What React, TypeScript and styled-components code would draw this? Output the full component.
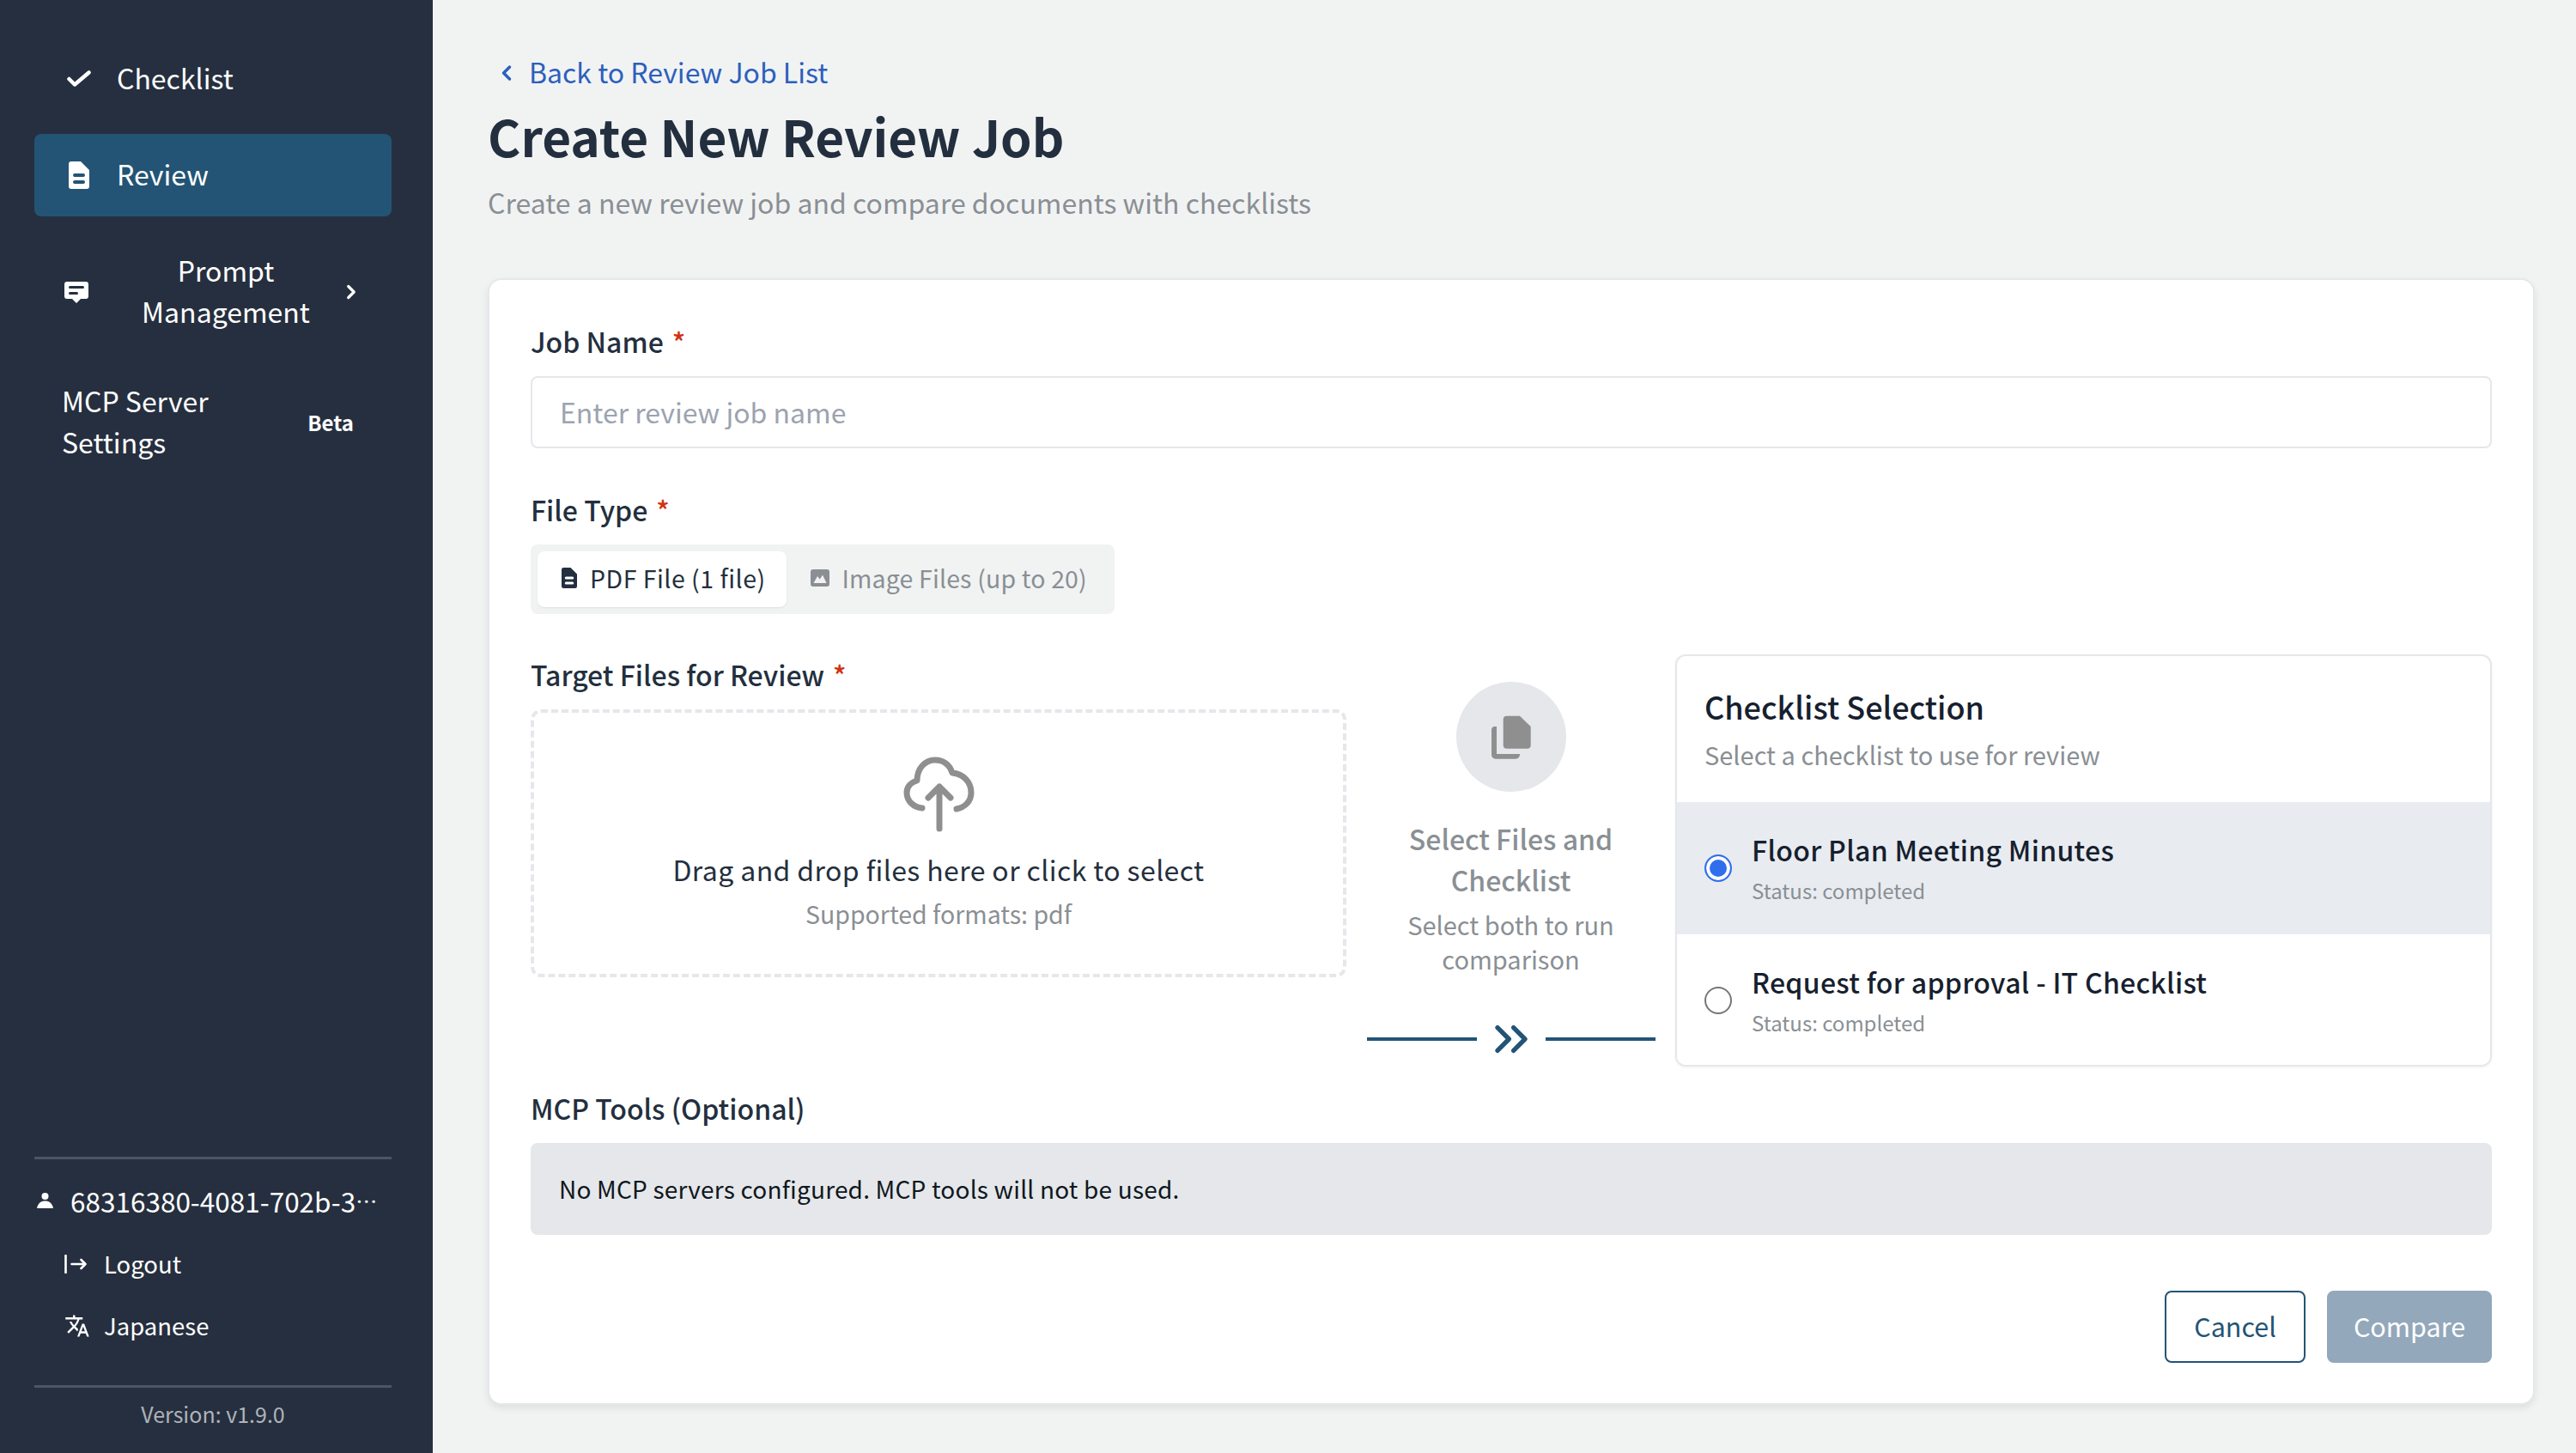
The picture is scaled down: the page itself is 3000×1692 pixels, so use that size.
import * as React from 'react';
import styled, { createGlobalStyle } from 'styled-components';
import { MdTranslate } from 'react-icons/md';
import { LuChevronLeft, LuChevronRight, LuChevronsRight } from 'react-icons/lu';

const GlobalStyle = createGlobalStyle`
  html, body { margin: 0; padding: 0; }
  body {
    background: #f1f3f3;
    font-family: "Noto Sans CJK JP", "Noto Sans", sans-serif;
    color: #232f3e;
  }
  * { box-sizing: border-box; }
`;

const Page = styled.div`
  display: flex;
  width: 3000px;
  height: 1692px;
  overflow: hidden;
`;

const Sidebar = styled.aside`
  width: 504px;
  flex-shrink: 0;
  background: #262f3f;
  color: #fff;
  display: flex;
  flex-direction: column;
  padding: 44px 48px 16px 40px;
`;

const Nav = styled.nav`
  flex: 1;
  display: flex;
  flex-direction: column;
`;

const NavItem = styled.a<{ $active?: boolean; $gap?: number }>`
  display: flex;
  align-items: center;
  min-height: 96px;
  margin-bottom: ${({ $gap }) => $gap ?? 16}px;
  padding: 22px 32px 26px;
  border-radius: 8px;
  font-size: 32px;
  line-height: 48px;
  background: ${({ $active }) => ($active ? '#235475' : 'transparent')};
`;

const NavIcon = styled.span<{ $shift?: number }>`
  width: 64px;
  flex-shrink: 0;
  display: flex;
  align-items: center;
  padding-left: ${({ $shift }) => $shift ?? 0}px;
  margin-top: 4px;
`;

const NavLabel = styled.span<{ $center?: boolean }>`
  flex: 1;
  text-align: ${({ $center }) => ($center ? 'center' : 'left')};
  margin-right: ${({ $center }) => ($center ? 6 : 0)}px;
`;

const Caret = styled.span`
  display: flex;
  font-size: 26px;
  margin-top: 4px;
  margin-right: 2px;
`;

const BetaTag = styled.span`
  font-size: 24px;
  font-weight: 700;
  margin: 4px 12px 0 72px;
`;

const FooterBlock = styled.div`
  border-top: 3px solid #4b5563;
`;

const UserRow = styled.div`
  display: flex;
  align-items: center;
  height: 36px;
  margin: 30px 0 20px 0;
  font-size: 31.5px;
  white-space: nowrap;
`;

const UserIcon = styled.span`
  display: flex;
  width: 42px;
  padding-left: 3px;
  flex-shrink: 0;
`;

const UserDots = styled.span`
  font-size: 25px;
`;

const FooterLink = styled.a`
  display: flex;
  align-items: center;
  height: 72px;
  padding: 0 0 2px 35px;
  font-size: 27.5px;
`;

const FooterIcon = styled.span`
  display: flex;
  width: 46px;
  font-size: 30px;
  margin-top: 2px;
`;

const Version = styled.div`
  margin-top: 33px;
  border-top: 3px solid #4b5563;
  height: 63px;
  display: flex;
  align-items: center;
  justify-content: center;
  font-size: 25px;
  color: #aeb3ba;
`;

const Main = styled.main`
  flex: 1;
  min-width: 0;
  padding: 60px 48px 0 64px;
`;

const BackLink = styled.a`
  display: flex;
  align-items: center;
  height: 46px;
  font-size: 32px;
  color: #2d5fbd;
  padding-left: 8px;
  gap: 12px;
`;

const BackIcon = styled.span`
  display: flex;
  font-size: 28px;
  margin-top: 4px;
`;

const Title = styled.h1`
  margin: 12px 0 0;
  font-size: 58.5px;
  line-height: 80px;
  font-weight: 700;
  color: #232f3e;
`;

const Subtitle = styled.p`
  margin: 14px 0 0;
  font-size: 32px;
  line-height: 46px;
  color: #8a8f94;
`;

const Card = styled.section`
  margin-top: 66px;
  height: 1312px;
  background: #fff;
  border: 2px solid #e5e7eb;
  border-radius: 16px;
  box-shadow: 0 4px 8px rgba(0, 0, 0, 0.08);
  padding: 48px 48px 46px;
`;

const FieldLabel = styled.label<{ $top?: number }>`
  display: block;
  height: 46px;
  line-height: 46px;
  margin: ${({ $top }) => $top ?? 0}px 0 18px;
  font-size: 32px;
  font-weight: 500;
  color: #232f3e;
`;

const Req = styled.span`
  color: #d13212;
  margin-left: 10px;
`;

const TextInput = styled.input`
  display: block;
  width: 100%;
  height: 84px;
  padding: 0 32px 3px;
  border: 2px solid #e5e7eb;
  border-radius: 8px;
  font: inherit;
  font-size: 32px;
  outline: none;
  &::placeholder { color: #9ca3af; }
`;

const Toggle = styled.div`
  display: inline-flex;
  align-items: center;
  height: 81px;
  padding: 8px;
  background: #f1f3f3;
  border-radius: 8px;
  vertical-align: top;
`;

const ToggleBtn = styled.button<{ $on?: boolean }>`
  display: flex;
  align-items: center;
  gap: 15px;
  height: 65px;
  padding: 0 24px 4px 28px;
  border: 0;
  border-radius: 8px;
  font: inherit;
  font-size: 28.5px;
  letter-spacing: ${({ $on }) => ($on ? '0.5px' : '0.15px')};
  background: ${({ $on }) => ($on ? '#fff' : 'transparent')};
  color: ${({ $on }) => ($on ? '#232f3e' : '#8a8f94')};
  box-shadow: ${({ $on }) => ($on ? '0 1px 2px rgba(0,0,0,.08)' : 'none')};
`;

const CompareGrid = styled.div`
  display: grid;
  grid-template-columns: 950px 1fr 951px;
  margin-top: 47px;
  height: 480px;
`;

const DropZone = styled.div`
  height: 312px;
  border: 4px dashed #e5e7eb;
  border-radius: 12px;
  display: flex;
  flex-direction: column;
  align-items: center;
  padding-top: 48px;
`;

const UploadSvg = styled.svg`
  width: 90px;
  height: 94px;
  margin-left: 4px;
  color: #8f8f8f;
`;

const DropText = styled.div`
  margin-top: 16px;
  font-size: 32px;
  line-height: 48px;
  letter-spacing: 0.4px;
`;

const DropHint = styled.div`
  margin-top: 6px;
  font-size: 28.5px;
  line-height: 44px;
  color: #8a8f94;
`;

const Middle = styled.div`
  display: flex;
  flex-direction: column;
  align-items: center;
  padding: 32px 0 0;
`;

const CircleIcon = styled.div`
  width: 128px;
  height: 128px;
  border-radius: 50%;
  background: #e5e7eb;
  color: #8f8f8f;
  display: flex;
  align-items: center;
  justify-content: center;
`;

const MiddleTitle = styled.div`
  width: 270px;
  margin-top: 30px;
  text-align: center;
  font-size: 32px;
  font-weight: 500;
  line-height: 48px;
  color: #8a8f94;
`;

const MiddleHint = styled.div`
  width: 270px;
  margin-top: 8px;
  text-align: center;
  font-size: 29px;
  line-height: 40px;
  color: #8a8f94;
`;

const ArrowRow = styled.div`
  margin-top: auto;
  display: flex;
  align-items: center;
  gap: 8px;
  color: #235475;
`;

const ArrowLine = styled.span`
  width: 128px;
  height: 4px;
  background: #235475;
`;

const ArrowIcon = styled.span`
  display: flex;
  font-size: 64px;
`;

const ChecklistPanel = styled.div`
  border: 2px solid #e5e7eb;
  border-radius: 12px;
  overflow: hidden;
  box-shadow: 0 1px 3px rgba(0, 0, 0, 0.06);
  height: 480px;
`;

const PanelHead = styled.div`
  height: 170px;
  padding: 32px 32px 0;
`;

const PanelTitle = styled.div`
  font-size: 36px;
  line-height: 52px;
  font-weight: 500;
  color: #16202e;
`;

const PanelSub = styled.div`
  margin-top: 8px;
  font-size: 29px;
  line-height: 44px;
  color: #8a8f94;
`;

const Option = styled.label<{ $on?: boolean }>`
  display: flex;
  align-items: center;
  height: 154px;
  padding: 0 32px;
  background: ${({ $on }) => ($on ? '#e8ecf0' : '#fff')};
`;

const Radio = styled.span<{ $on?: boolean }>`
  width: 32px;
  height: 32px;
  border-radius: 50%;
  flex-shrink: 0;
  margin-right: 23px;
  border: 2px solid ${({ $on }) => ($on ? '#2f6fed' : '#767676')};
  background: ${({ $on }) => ($on ? '#2f6fed' : '#fff')};
  box-shadow: ${({ $on }) => ($on ? 'inset 0 0 0 4px #fff' : 'none')};
`;

const OptionName = styled.div`
  font-size: 32px;
  line-height: 44px;
  font-weight: 500;
  letter-spacing: 0.3px;
  color: #16202e;
`;

const OptionStatus = styled.div`
  margin-top: 8px;
  font-size: 24px;
  line-height: 36px;
  color: #8a8f94;
`;

const Notice = styled.div`
  height: 107px;
  display: flex;
  align-items: center;
  padding: 0 33px 2px;
  background: #e5e7ea;
  border-radius: 8px;
  font-size: 28px;
  letter-spacing: 0.2px;
  color: #0f1720;
`;

const Actions = styled.div`
  display: flex;
  justify-content: flex-end;
  gap: 25px;
  margin-top: 65px;
`;

const Button = styled.button<{ $primary?: boolean }>`
  height: 84px;
  min-width: ${({ $primary }) => ($primary ? 192 : 164)}px;
  padding: 0 0 2px;
  border-radius: 8px;
  font: inherit;
  font-size: 30.5px;
  border: 2px solid ${({ $primary }) => ($primary ? '#93a8ba' : '#235475')};
  background: ${({ $primary }) => ($primary ? '#93a8ba' : '#fff')};
  color: ${({ $primary }) => ($primary ? '#fff' : '#235475')};
`;

const CheckIcon = () => (
  <svg width="28" height="20" viewBox="0 0 28 20" fill="none" stroke="currentColor" strokeWidth="4.5" strokeLinecap="round" strokeLinejoin="round">
    <path d="M2.5 10 9 16.5 25.5 2.5" />
  </svg>
);

const DocIcon = ({ w, h }: { w: number; h: number }) => (
  <svg width={w} height={h} viewBox="0 0 24 32" fill="currentColor" fillRule="evenodd">
    <path d="M3 0H14L24 10V29a3 3 0 0 1-3 3H3a3 3 0 0 1-3-3V3a3 3 0 0 1 3-3ZM7 14a2 2 0 0 0 0 4H17a2 2 0 0 0 0-4ZM7 22a2 2 0 0 0 0 4H17a2 2 0 0 0 0-4Z" />
  </svg>
);

const MessageIcon = () => (
  <svg width="28" height="25" viewBox="0 0 28 25" fill="currentColor" fillRule="evenodd">
    <path d="M3 0H25a3 3 0 0 1 3 3V17a3 3 0 0 1-3 3H19L14 25 9 20H3a3 3 0 0 1-3-3V3a3 3 0 0 1 3-3ZM6.5 5a1.5 1.5 0 0 0 0 3H21.5a1.5 1.5 0 0 0 0-3ZM6.5 12a1.5 1.5 0 0 0 0 3H14.5a1.5 1.5 0 0 0 0-3Z" />
  </svg>
);

const PersonIcon = () => (
  <svg width="19" height="18" viewBox="0 0 19 18" fill="currentColor">
    <circle cx="9.5" cy="4" r="4" />
    <path d="M0 18C1 12 5 9.5 9.5 9.5 14 9.5 18 12 19 18Z" />
  </svg>
);

const LogoutIcon = () => (
  <svg width="26" height="22" viewBox="0 0 26 22" fill="none" stroke="currentColor" strokeWidth="2.6" strokeLinecap="round" strokeLinejoin="round">
    <path d="M1.5 1V21M8.5 11H24.5M19.5 6 24.5 11 19.5 16" />
  </svg>
);

const ImageIcon = () => (
  <svg width="22" height="20" viewBox="0 0 22 20" fill="currentColor" fillRule="evenodd">
    <path d="M3 0H19a3 3 0 0 1 3 3V17a3 3 0 0 1-3 3H3a3 3 0 0 1-3-3V3a3 3 0 0 1 3-3ZM3.5 16 8 8 10.8 11.5 14 6.5 18.5 16Z" />
  </svg>
);

const CopiesIcon = () => (
  <svg width="46" height="51" viewBox="27 22 46 51" fill="currentColor">
    <path d="M44.7 22.7H60L72.7 35V56.7a4 4 0 0 1-4 4H44.7a4 4 0 0 1-4-4V26.7a4 4 0 0 1 4-4Z" />
    <path d="M33 35H31a4 4 0 0 0-4 4V68a4.7 4.7 0 0 0 4.7 4.7H55a5 5 0 0 0 5-5.7H33Z" />
  </svg>
);

export default function App() {
  return (
    <Page>
      <GlobalStyle />
      <Sidebar>
        <Nav>
          <NavItem>
            <NavIcon $shift={6}><CheckIcon /></NavIcon>
            <NavLabel>Checklist</NavLabel>
          </NavItem>
          <NavItem $active>
            <NavIcon $shift={8}><DocIcon w={24} h={32} /></NavIcon>
            <NavLabel>Review</NavLabel>
          </NavItem>
          <NavItem $gap={8}>
            <NavIcon $shift={3}><MessageIcon /></NavIcon>
            <NavLabel $center>Prompt Management</NavLabel>
            <Caret><LuChevronRight strokeWidth={3} /></Caret>
          </NavItem>
          <NavItem>
            <NavLabel>MCP Server Settings</NavLabel>
            <BetaTag>Beta</BetaTag>
          </NavItem>
        </Nav>
        <FooterBlock>
          <UserRow>
            <UserIcon><PersonIcon /></UserIcon>
            68316380-4081-702b-3<UserDots>⋯</UserDots>
          </UserRow>
          <FooterLink>
            <FooterIcon><LogoutIcon /></FooterIcon>
            Logout
          </FooterLink>
          <FooterLink>
            <FooterIcon><MdTranslate /></FooterIcon>
            Japanese
          </FooterLink>
          <Version>Version: v1.9.0</Version>
        </FooterBlock>
      </Sidebar>
      <Main>
        <BackLink>
          <BackIcon><LuChevronLeft strokeWidth={3} /></BackIcon>
          Back to Review Job List
        </BackLink>
        <Title>Create New Review Job</Title>
        <Subtitle>Create a new review job and compare documents with checklists</Subtitle>
        <Card>
          <FieldLabel>Job Name<Req>*</Req></FieldLabel>
          <TextInput placeholder="Enter review job name" readOnly />
          <FieldLabel $top={48}>File Type<Req>*</Req></FieldLabel>
          <Toggle>
            <ToggleBtn $on>
              <DocIcon w={18} h={24} />
              PDF File (1 file)
            </ToggleBtn>
            <ToggleBtn>
              <ImageIcon />
              Image Files (up to 20)
            </ToggleBtn>
          </Toggle>
          <CompareGrid>
            <div>
              <FieldLabel>Target Files for Review<Req>*</Req></FieldLabel>
              <DropZone>
                <UploadSvg viewBox="20 8 90 94" fill="none" stroke="currentColor" strokeWidth="7" strokeLinecap="round" strokeLinejoin="round">
                  <path d="M44 71C34 70 26 63 26 53C26 46 31 41 38 39C38 25 47 15 59 15C69 15 76 21 79 30C92 31 101 41 101 53C101 63 94 70 84 72" />
                  <path d="M64 95V46M51 59 64 46 77 59" />
                </UploadSvg>
                <DropText>Drag and drop files here or click to select</DropText>
                <DropHint>Supported formats: pdf</DropHint>
              </DropZone>
            </div>
            <Middle>
              <CircleIcon><CopiesIcon /></CircleIcon>
              <MiddleTitle>Select Files and Checklist</MiddleTitle>
              <MiddleHint>Select both to run comparison</MiddleHint>
              <ArrowRow>
                <ArrowLine />
                <ArrowIcon><LuChevronsRight /></ArrowIcon>
                <ArrowLine />
              </ArrowRow>
            </Middle>
            <ChecklistPanel>
              <PanelHead>
                <PanelTitle>Checklist Selection</PanelTitle>
                <PanelSub>Select a checklist to use for review</PanelSub>
              </PanelHead>
              <Option $on>
                <Radio $on />
                <div>
                  <OptionName>Floor Plan Meeting Minutes</OptionName>
                  <OptionStatus>Status: completed</OptionStatus>
                </div>
              </Option>
              <Option>
                <Radio />
                <div>
                  <OptionName>Request for approval - IT Checklist</OptionName>
                  <OptionStatus>Status: completed</OptionStatus>
                </div>
              </Option>
            </ChecklistPanel>
          </CompareGrid>
          <FieldLabel $top={25}>MCP Tools (Optional)</FieldLabel>
          <Notice>No MCP servers configured. MCP tools will not be used.</Notice>
          <Actions>
            <Button>Cancel</Button>
            <Button $primary>Compare</Button>
          </Actions>
        </Card>
      </Main>
    </Page>
  );
}
